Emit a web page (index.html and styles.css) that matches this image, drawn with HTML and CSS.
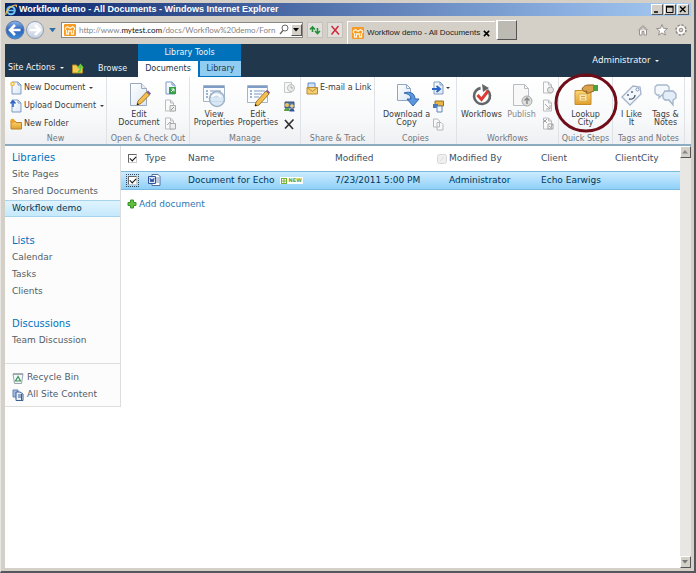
FILE: index.html
```html
<!DOCTYPE html>
<html lang="en">
<head>
<meta charset="utf-8">
<title>Workflow demo - All Documents</title>
<link rel="stylesheet" href="styles.css">
</head>
<body>
<svg class="defs" aria-hidden="true">
  <defs>
    <linearGradient id="ball" x1="0" y1="0" x2="0" y2="1"><stop offset="0" stop-color="#8fb8ea"/><stop offset=".5" stop-color="#2a62b8"/><stop offset="1" stop-color="#3f8fdc"/></linearGradient>
    <linearGradient id="glass" x1="0" y1="0" x2="0" y2="1"><stop offset="0" stop-color="#f4f7fb"/><stop offset="1" stop-color="#c3cedd"/></linearGradient>
    <linearGradient id="paper" x1="0" y1="0" x2="1" y2="1"><stop offset="0" stop-color="#fff"/><stop offset="1" stop-color="#dbe6f3"/></linearGradient>
    <linearGradient id="gold" x1="0" y1="0" x2="0" y2="1"><stop offset="0" stop-color="#fbd774"/><stop offset="1" stop-color="#e0a02c"/></linearGradient>
    <symbol id="site" viewBox="0 0 12 12"><rect width="12" height="12" rx="1" fill="#f59a23"/><path d="M1.500 6V4l2-1.500 2 1.500h1l2-1.500 2 1.500v2M2.500 6v4h2V7h3v3h2V6" fill="none" stroke="#fff2d8" stroke-width="1.300"/></symbol>
    <symbol id="page" viewBox="0 0 12 14"><path d="M2 1h6l3 3v9H2z" fill="url(#paper)" stroke="#7f9cc4"/><path d="M8 1v3h3" fill="none" stroke="#7f9cc4"/></symbol>
    <symbol id="graypage" viewBox="0 0 12 14"><path d="M1.500 1h5l3 3v8h-8z" fill="#fafafa" stroke="#b9bcc0"/><path d="M6.500 1v3h3" fill="none" stroke="#b9bcc0"/></symbol>
  </defs>
</svg>
<div class="window">
  <header class="titlebar">
    <svg class="ie" viewBox="0 0 12 12"><circle cx="6" cy="6.500" r="3.800" fill="none" stroke="#6fc4f5" stroke-width="2"/><path d="M3 6.500h6.500" stroke="#6fc4f5" stroke-width="1.500"/><path d="M1 11C0 8 6 1 11 1c1 1 0 2 0 2" fill="none" stroke="#f5c342" stroke-width="1.200"/></svg>
    <h1>Workflow demo - All Documents - Windows Internet Explorer</h1>
    <div class="winbuttons">
      <button aria-label="Minimize"><svg viewBox="0 0 10 9"><path d="M2 7h4" stroke="#000" stroke-width="1.500"/></svg></button>
      <button aria-label="Maximize"><svg viewBox="0 0 10 9"><path d="M1.500 2h6.500v5.500H1.500z" fill="none" stroke="#000"/><path d="M1 1.500h7.500" stroke="#000" stroke-width="1.500"/></svg></button>
      <button aria-label="Close"><svg viewBox="0 0 10 9"><path d="M2 1.500l5.500 5.500M7.500 1.500L2 7" stroke="#000" stroke-width="1.400"/></svg></button>
    </div>
  </header>

  <div class="toolbar">
    <button class="plain" aria-label="Back"><svg class="nav" viewBox="0 0 20 20"><circle cx="10" cy="10" r="9" fill="url(#ball)" stroke="#5b7aa8"/><path d="M15.500 10H6M10 5l-5 5 5 5" fill="none" stroke="#fff" stroke-width="2.600"/></svg></button>
    <button class="plain" aria-label="Forward"><svg class="nav" viewBox="0 0 20 20"><circle cx="10" cy="10" r="8.500" fill="url(#glass)" stroke="#8d9bb0"/><path d="M4.500 10H14M10 5l5 5-5 5" fill="none" stroke="#fff" stroke-width="2.600"/></svg></button>
    <button class="plain history" aria-label="Recent pages"><svg viewBox="0 0 8 6"><path d="M0 0h8L4 5z" fill="#2d6fa3"/></svg></button>
    <div class="address">
      <svg class="site"><use href="#site"/></svg>
      <a class="url" href="#">http://www.<b>mytest.com</b>/docs/Workflow%20demo/Forn</a>
      <button class="plain" aria-label="Search"><svg class="search" viewBox="0 0 10 12"><circle cx="6" cy="4" r="3" fill="none" stroke="#666"/><path d="M4 6.500L1 10" stroke="#666" stroke-width="1.300"/></svg></button>
      <button class="raised" aria-label="Show addresses"><svg viewBox="0 0 8 8"><path d="M1 2h6L4 5.500z"/></svg></button>
    </div>
    <button class="tool" aria-label="Refresh"><svg viewBox="0 0 12 12"><path d="M3.500 8V4M1 5.500L3.500 3 6 5.500M8.500 4v5M6 7l2.500 2.500L11 7" fill="none" stroke="#24913a" stroke-width="1.600"/></svg></button>
    <button class="tool" aria-label="Stop"><svg viewBox="0 0 12 12"><path d="M2.500 2l7.500 8.500M9.500 2L2.500 10.500" stroke="#d02b3c" stroke-width="1.500"/></svg></button>
    <div class="tab">
      <svg class="site"><use href="#site"/></svg><span>Workflow demo - All Documents</span>
      <button class="plain" aria-label="Close tab"><svg class="closetab" viewBox="0 0 8 8"><path d="M1 1l6 6M7 1L1 7" stroke="#000" stroke-width="1.800"/></svg></button>
    </div>
    <button class="newtab" aria-label="New tab"></button>
    <div class="tools">
      <button class="plain" aria-label="Home"><svg viewBox="0 0 12 12"><path d="M1 6.500L6 1.500l5 5M2.500 6v5H5V7.500h2V11h2.500V6L6 2.500z" fill="#fff" stroke="#96928b"/></svg></button>
      <button class="plain" aria-label="Favorites"><svg viewBox="0 0 12 12"><path d="M6 .5l1.500 3.800 4 .2-3.100 2.600 1 4L6 8.900l-3.400 2.200 1-4L.5 4.500l4-.2z" fill="#fff" stroke="#96928b"/></svg></button>
      <button class="plain" aria-label="Settings"><svg viewBox="0 0 12 12"><circle cx="6" cy="6" r="4.500" fill="none" stroke="#8e8a83" stroke-width="2.600" stroke-dasharray="2 1.500"/><circle cx="6" cy="6" r="3.200" fill="#d4d0c8" stroke="#fff" stroke-width="2"/><circle cx="6" cy="6" r="1.800" fill="none" stroke="#96928b"/></svg></button>
    </div>
  </div>

  <div class="viewport">
    <nav class="topbar">
      <button class="menu actions">Site Actions <i class="caret"></i></button>
      <button class="plain up" aria-label="Navigate up"><svg viewBox="0 0 12 11"><path d="M.5 2h4l1 1.500h5V10H.5z" fill="#f2c955" stroke="#b88a23"/><path d="M6 9c2 0 2.500-2 2.500-5M6 5l2.500-3L11 5" fill="none" stroke="#62c93b" stroke-width="1.800"/></svg></button>
      <a class="browse" href="#">Browse</a>
      <div class="context">
        <div class="ctitle">Library Tools</div>
        <div class="ctabs"><a class="on" href="#">Documents</a><a class="off" href="#">Library</a></div>
      </div>
      <button class="menu user">Administrator <i class="caret"></i></button>
    </nav>

    <section class="ribbon">
      <div class="group g-new">
        <div class="items rows">
          <button><svg viewBox="0 0 12 14"><use href="#page"/><circle cx="2.500" cy="3" r="2.300" fill="#f3ba34"/><circle cx="2.500" cy="3" r="1" fill="#fff5bf"/></svg>New Document <i class="caret"></i></button>
          <button><svg viewBox="0 0 12 14"><use href="#page"/><path d="M3 8V2M.5 4.500L3 2l2.500 2.500" fill="none" stroke="#2c65c2" stroke-width="1.600"/></svg>Upload Document <i class="caret"></i></button>
          <button><svg viewBox="0 0 12 14"><path d="M1 4h4l1 1.500h5.500V12H1z" fill="url(#gold)" stroke="#b88422"/><circle cx="2.500" cy="4" r="2.200" fill="#f39f24"/></svg>New Folder</button>
        </div>
        <h2>New</h2>
      </div>
      <div class="group g-open">
        <div class="items">
          <button class="big"><svg viewBox="0 0 26 26"><path d="M4.500 1.500h11l5 5v17h-16z" fill="url(#paper)" stroke="#9aa9bc"/><path d="M15.500 1.500v5h5" fill="#e6edf5" stroke="#9aa9bc"/><path d="M11 23l1-4L20.500 10l3 3L15 21.500z" fill="#f3bf50" stroke="#a27629"/><path d="M20.500 10l1.500-1.500 3 3-1.500 1.500z" fill="#7c5c9e"/><path d="M11 23l.5-2 1.500 1.500z"/></svg>Edit<br>Document</button>
          <div class="minis">
            <button aria-label="Check out"><svg viewBox="0 0 12 14"><use href="#page"/><path d="M5 6h7v7H5z" fill="#35a24a"/><path d="M7 11l3-3M7.500 8H10v2.500" fill="none" stroke="#fff"/></svg></button>
            <button aria-label="Check in"><svg viewBox="0 0 12 14"><use href="#graypage"/><path d="M6 6.500h5.500V12H6z" fill="#eee" stroke="#aaa"/><path d="M7 11l3-3" stroke="#999"/></svg></button>
            <button aria-label="Discard check out"><svg viewBox="0 0 12 14"><use href="#graypage"/><path d="M6 6.500h5.500V12H6zM3 8l3-3 2 2" fill="#eee" stroke="#aaa"/></svg></button>
          </div>
        </div>
        <h2>Open &amp; Check Out</h2>
      </div>
      <div class="group g-manage">
        <div class="items">
          <button class="big"><svg viewBox="0 0 26 26"><path d="M2.500 3.500h21v16h-21z" fill="#fbfcfe" stroke="#a4b4c9"/><path d="M3 5h20" stroke="#7d9cc6" stroke-width="2"/><path d="M5 9h2M5 12h2M5 15h2" stroke="#3c6db0"/><path d="M9 9h11M9 12h11M9 15h8" stroke="#8099bd"/><circle cx="16" cy="17" r="7.500" fill="#cfe2f3" fill-opacity=".8" stroke="#9db2c8" stroke-width="1.500"/><path d="M11 15c3-4 7-3 9 0" fill="none" stroke="#fff" stroke-width="2"/></svg>View<br>Properties</button>
          <button class="big"><svg viewBox="0 0 26 26"><path d="M2.500 3.500h20v17h-20z" fill="#fbfcfe" stroke="#a4b4c9"/><path d="M3 5h19" stroke="#7d9cc6" stroke-width="2"/><path d="M5 9h2M5 12h2M5 15h2" stroke="#3c6db0"/><path d="M9 9h11M9 12h8M9 15h5" stroke="#8099bd"/><path d="M10 24l1-4L21 9l3 3L14 23z" fill="#f3bf50" stroke="#a27629"/><path d="M21 9l1-1.500 3 3-1 1.500z" fill="#7c5c9e"/><path d="M10 24l.5-2 1.500 1.500z"/></svg>Edit<br>Properties</button>
          <div class="minis">
            <button aria-label="Version history"><svg viewBox="0 0 12 14"><path d="M1.500 1.500h7v10h-7z" fill="#f7f7f7" stroke="#c6c8ca"/><circle cx="8" cy="7" r="3.500" fill="#eee" stroke="#bbb"/><path d="M8 5v2h2" fill="none" stroke="#aaa"/></svg></button>
            <button aria-label="Permissions"><svg viewBox="0 0 12 14"><path d="M2 3h9v6H2z" fill="#4e78ae" stroke="#39506f"/><circle cx="4" cy="6" r="2" fill="#efc45b"/><path d="M1 12c0-4 6-4 6 0z" fill="#5a9d45"/><circle cx="9" cy="7" r="1.800" fill="#efd08d"/><path d="M6.500 12.500c0-4 5-4 5 0z" fill="#31589b"/></svg></button>
            <button aria-label="Delete"><svg viewBox="0 0 12 14"><path d="M2 3l8 9M10.500 2.500L2 11.500" stroke="#333" stroke-width="1.700"/></svg></button>
          </div>
        </div>
        <h2>Manage</h2>
      </div>
      <div class="group g-share">
        <div class="items rows">
          <button><svg viewBox="0 0 12 14"><path d="M2 2h7v8H2z" fill="#cfe2f8" stroke="#5e8cc8"/><path d="M1 6.500h10.500V13H1z" fill="#f6cf70" stroke="#b98b34"/><path d="M1 6.500l5.500 4 5-4" fill="none" stroke="#b98b34"/></svg>E-mail a Link</button>
        </div>
        <h2>Share &amp; Track</h2>
      </div>
      <div class="group g-copies">
        <div class="items">
          <button class="big"><svg viewBox="0 0 26 26"><path d="M3.500 2.500h9l4 4v12h-13z" fill="url(#paper)" stroke="#90a7c5"/><path d="M12.500 2.500v4h4" fill="none" stroke="#90a7c5"/><path d="M10 11c6-2 11 0 11 6h4l-6 7-6-7h4c0-3-2-5-7-6z" fill="#5b98dd" stroke="#3467ac"/></svg>Download a<br>Copy</button>
          <div class="minis">
            <button class="wide" aria-label="Send to"><svg viewBox="0 0 12 14"><use href="#page"/><path d="M0 8h7M4.500 5L8 8l-3.500 3" fill="none" stroke="#2b66c4" stroke-width="2"/></svg><i class="caret"></i></button>
            <button aria-label="Manage copies"><svg viewBox="0 0 12 14"><path d="M3 2h8.500v5H3z" fill="#e9b542" stroke="#957226"/><path d="M1 5h5v4H1z" fill="#4779bb"/><path d="M5 7h5v6H5z" fill="#f2f7fd" stroke="#6084b5"/></svg></button>
            <button aria-label="Go to source"><svg viewBox="0 0 12 14"><path d="M1.500 2h4l2 2v6h-6zM5 5.500h4l2 2V13H5z" fill="#f9f9f9" stroke="#b6b8bb"/></svg></button>
          </div>
        </div>
        <h2>Copies</h2>
      </div>
      <div class="group g-flows">
        <div class="items">
          <button class="big"><svg viewBox="0 0 26 26"><circle cx="13" cy="14" r="8" fill="#fff" stroke="#636668" stroke-width="2.600" stroke-dasharray="43 8" transform="rotate(-50 13 14)"/><path d="M13 2l7 4-6 4z" fill="#636668"/><path d="M8.500 13l4 4.500L19 9" fill="none" stroke="#dc3c32" stroke-width="3"/></svg>Workflows</button>
          <button class="big disabled"><svg viewBox="0 0 26 26"><path d="M4.500 2.500h11l4 4v17h-15z" fill="#f8f8f8" stroke="#b9bcc0"/><path d="M15.500 2.500v4h4" fill="none" stroke="#b9bcc0"/><circle cx="18" cy="19" r="5" fill="#ddd" stroke="#aaa"/><path d="M18 22v-6M15.500 18.500L18 16l2.500 2.500" fill="none" stroke="#888" stroke-width="1.500"/></svg>Publish</button>
          <div class="minis">
            <button aria-label="Unpublish"><svg viewBox="0 0 12 14"><use href="#graypage"/><circle cx="8.500" cy="9" r="3" fill="#e4e4e4" stroke="#aaa"/></svg></button>
            <button aria-label="Approve"><svg viewBox="0 0 12 14"><use href="#graypage"/><path d="M3 5l5 5M8 6v4H4" fill="none" stroke="#aaa"/></svg></button>
            <button aria-label="Cancel approval"><svg viewBox="0 0 12 14"><use href="#graypage"/><path d="M1 2l4 4M5 2L1 6M6 7h5v5H6zM7 9l1.500 1.500L11 7" fill="none" stroke="#a4a4a4"/></svg></button>
          </div>
        </div>
        <h2>Workflows</h2>
      </div>
      <div class="group g-quick">
        <div class="items">
          <button class="big"><svg viewBox="0 0 26 26"><path d="M2 8.500h16v14H2z" fill="url(#gold)" stroke="#c78d2d"/><path d="M6 12h8v7H6z" fill="#fbe7ae" stroke="#e0b053"/><path d="M8 14.500h4M8 17h4" stroke="#d79d42"/><path d="M9 7c2-4 5-4 7-4h5v6c-4 1-5 3-8 2l1-2c-3 1-4 0-5-2z" fill="#dba14b" stroke="#8a5d1e"/><path d="M20 3h5v6h-5z" fill="#46a33b"/></svg>Lookup<br>City</button>
        </div>
        <h2>Quick Steps</h2>
        <svg class="ring" viewBox="0 0 64 60" aria-hidden="true"><ellipse cx="32" cy="30" rx="30" ry="28" fill="none" stroke="#700d18" stroke-width="3"/></svg>
      </div>
      <div class="group g-tags">
        <div class="items">
          <button class="big"><svg viewBox="0 0 26 26"><path d="M3 15L14 4l7 1 1 7-11 11z" fill="#f3f7fc" stroke="#a3b4ca" stroke-width="1.300"/><circle cx="18.500" cy="7.500" r="1.500" fill="#fff" stroke="#8296b1"/><path d="M9 12v2M13 9v2M10 17c4 1 6-2 6-4" fill="none" stroke="#44556c" stroke-width="1.300"/></svg>I Like<br>It</button>
          <button class="big"><svg viewBox="0 0 26 26"><path d="M4 3h10l2 2v6l-2 2H9l-3 3v-3H4l-2-2V5z" fill="#f4f8fc" stroke="#a8b8cc" stroke-width="1.300"/><path d="M12 9h8l3 3v4l-3 2v5l-4-5h-4l-2-2v-4z" fill="#e3edf7" stroke="#a0b2c9" stroke-width="1.300"/></svg>Tags &amp;<br>Notes</button>
        </div>
        <h2>Tags and Notes</h2>
      </div>
    </section>

    <div class="body">
      <aside class="side">
        <nav>
          <h3>Libraries</h3>
          <a href="#">Site Pages</a><a href="#">Shared Documents</a><a class="here" href="#">Workflow demo</a>
          <h3>Lists</h3>
          <a href="#">Calendar</a><a href="#">Tasks</a><a href="#">Clients</a>
          <h3>Discussions</h3>
          <a href="#">Team Discussion</a>
        </nav>
        <div class="extra">
          <a href="#"><svg viewBox="0 0 12 12"><path d="M1 2h10l-1.500 9.500h-7z" fill="#f5f8f8" stroke="#9aa6ab"/><path d="M1 2h10" stroke="#7e8b90"/><path d="M6 4.500L3.500 9h5z" fill="none" stroke="#3b9160" stroke-width="1.200"/></svg>Recycle Bin</a>
          <a href="#"><svg viewBox="0 0 12 12"><path d="M1 1h5v7H1z" fill="#9bbbe3" stroke="#6785b1"/><path d="M4 3h4l3 2v6.500H4z" fill="#e6eef9" stroke="#3e5f94"/><path d="M6 6h3M6 8h3M9.500 5v6" stroke="#3e5f94"/></svg>All Site Content</a>
        </div>
      </aside>
      <main>
        <table>
          <colgroup><col class="c-check"><col class="c-type"><col class="c-name"><col class="c-mod"><col class="c-by"><col class="c-client"><col></colgroup>
          <thead><tr>
            <th><input type="checkbox" checked aria-label="Select all"></th><th>Type</th><th>Name</th><th>Modified</th><th><svg class="presence" viewBox="0 0 10 10"><rect x=".5" y=".5" width="9" height="9" rx="2" fill="#efefef" stroke="#d8d8d8"/><path d="M3 7l4-4" stroke="#ddd"/></svg>Modified By</th><th>Client</th><th>ClientCity</th>
          </tr></thead>
          <tbody><tr>
            <td><input class="focus" type="checkbox" checked aria-label="Select Document for Echo"></td>
            <td><svg class="word" viewBox="0 0 13 12"><path d="M4 .5h6l2 2v9H4z" fill="#fff" stroke="#57709f"/><path d="M8 4h3M8 6h3M8 8h3" stroke="#7d93bd"/><path d="M.5 2.500h7v7h-7z" fill="#dfe8f8" stroke="#3255a0"/><path d="M2 4l1 4 1-3 1 3 1-4" fill="none" stroke="#2a4d9c"/></svg></td>
            <td>Document for Echo<span class="new"><svg viewBox="0 0 6 6"><rect x=".5" y=".5" width="5" height="5" fill="#fff" stroke="#73b234"/><path d="M3 1v4M1 3h4" stroke="#73b234"/></svg>NEW</span></td>
            <td>7/23/2011 5:00 PM</td><td class="by">Administrator</td><td>Echo Earwigs</td><td></td>
          </tr></tbody>
        </table>
        <a class="add" href="#"><svg viewBox="0 0 10 10"><path d="M3.500 1h3v2.500H9v3H6.500V9h-3V6.500H1v-3h2.500z" fill="#5fc03a" stroke="#38942b"/></svg>Add document</a>
      </main>
      <div class="scroll">
        <button class="raised" aria-label="Scroll up"><svg viewBox="0 0 8 8"><path d="M1 5.500h6L4 2z" fill="#888"/></svg></button>
        <button class="raised" aria-label="Scroll down"><svg viewBox="0 0 8 8"><path d="M1 2h6L4 5.500z" fill="#777"/></svg></button>
      </div>
    </div>
  </div>
</div>
</body>
</html>
```
FILE: styles.css
```css
* { box-sizing: border-box; }
body { margin: 0; font: 9px/12px "DejaVu Sans", sans-serif; color: #525c68; }
button { font: inherit; color: inherit; background: none; border: 0; padding: 0; margin: 0; }
a { color: inherit; text-decoration: none; }
svg { display: block; flex: none; }
h1, h2, h3 { margin: 0; font-weight: normal; }
.defs { position: absolute; width: 0; height: 0; }

.window { display: flex; flex-direction: column; min-height: 100vh; padding: 3px 3px 3px 4px; background: #d4d0c8; border-right: 2px solid #55575c; border-bottom: 2px solid #55575c; border-left: 1px solid #e8e6e2; }
.titlebar { display: flex; align-items: center; height: 13px; background: linear-gradient(90deg, #0a246a, #8fb4e4 85%, #a6caf0); color: #fff; }
.titlebar h1 { flex: 1; font: bold 9px/13px "Liberation Sans", sans-serif; }
.ie { width: 12px; height: 12px; margin-right: 2px; }
.winbuttons { display: flex; gap: 1px; margin-right: 2px; }
.winbuttons button, .raised { background: #d4d0c8; border: 1px solid; border-color: #fff #555 #555 #fff; }
.winbuttons button { width: 12px; height: 11px; }
.winbuttons svg { width: 10px; height: 9px; }

.toolbar { display: flex; align-items: center; height: 28px; color: #222; }
.nav { width: 20px; height: 20px; }
.history { margin: 0 5px 0 4px; }
.history svg { width: 7px; height: 5px; }
.address { display: flex; align-items: center; width: 242px; height: 16px; padding-left: 2px; background: #fff; border: 1px solid #8b8883; }
.address .site { margin-right: 3px; }
.site { width: 12px; height: 12px; }
.url { flex: 1; white-space: nowrap; color: #858585; font: 8px/14px Lato, sans-serif; }
.url b { font-weight: normal; color: #111; }
.search { width: 10px; height: 12px; margin: 0 2px; }
.raised { width: 11px; height: 12px; }
.raised svg { width: 8px; height: 8px; }
.tool { display: grid; place-items: center; width: 16px; height: 16px; margin-left: 4px; background: #e2e0dc; border: 1px solid #c5c2bb; }
.tool svg { width: 12px; height: 12px; }
.tab { display: flex; align-items: center; align-self: flex-end; gap: 3px; width: 148px; height: 23px; margin-left: 4px; padding-left: 4px; border: solid #fff; border-width: 1px 0 0 1px; font: 8px/12px "Liberation Sans", sans-serif; white-space: nowrap; }
.closetab { width: 7px; height: 7px; }
.newtab { width: 21px; height: 20px; margin-left: 1px; background: #bdb9b3; border: solid; border-width: 1px 1px 1px 2px; border-color: #fff #555 #555 #fff; }
.tools { display: flex; gap: 7px; margin-left: auto; padding-right: 4px; }
.tools svg { width: 12px; height: 12px; }

.viewport { flex: 1; display: flex; flex-direction: column; background: #fff; }
.topbar { display: flex; align-items: flex-end; height: 33px; background: #21374c; color: #f0f4f8; font: 8px/12px "DejaVu Sans", sans-serif; }
.caret { display: inline-block; border: 2px solid transparent; border-top-color: currentColor; border-bottom: 0; margin-left: 2px; vertical-align: middle; }
.actions { width: 62px; padding: 0 0 3px 3px; text-align: left; white-space: nowrap; }
.up { width: 31px; padding: 0 0 3px 5px; }
.up svg { width: 12px; height: 11px; }
.browse { width: 40px; padding-bottom: 2px; }
.context { width: 103px; background: #0072bc; text-align: center; }
.ctitle { height: 17px; line-height: 17px; }
.ctabs { display: flex; gap: 2px; height: 16px; line-height: 16px; color: #21374c; }
.on { width: 60px; background: #fff; }
.off { flex: 1; height: 15px; background: #91cdf2; }
.user { margin: 0 32px 11px auto; font: 9px/12px "Noto Sans", sans-serif; }

.ribbon { display: flex; height: 69px; background: linear-gradient(#fff, #f8f9fa 60%, #eef0f3); border-bottom: 2px solid #8aabc0; font: 8px/8px "DejaVu Sans", sans-serif; color: #3c3c3c; }
.group { display: flex; flex-direction: column; position: relative; border-right: 1px solid #dfe2e6; padding-top: 2px; }
.group h2 { font: 8px/11px "DejaVu Sans", sans-serif; color: #71777e; text-align: center; white-space: nowrap; }
.items { display: flex; height: 54px; justify-content: center; }
.rows { flex-direction: column; justify-content: flex-start; }
.rows button { display: flex; align-items: center; height: 18px; padding-left: 5px; gap: 2px; white-space: nowrap; }
.rows svg, .minis svg { width: 12px; height: 14px; }
.big { display: flex; flex-direction: column; align-items: center; white-space: nowrap; padding-top: 3px; width: 44px; }
.big svg { width: 26px; height: 26px; margin-bottom: 3px; }
.disabled { color: #85898e; }
.minis { width: 18px; }
.minis button { display: flex; align-items: center; justify-content: center; width: 18px; height: 18px; }
.minis .wide { width: 22px; justify-content: flex-start; padding-left: 3px; }
.g-new { width: 102px; }
.g-open { width: 83px; }
.g-manage { width: 111px; }
.g-share { width: 74px; }
.g-copies { width: 82px; }
.g-flows { width: 102px; }
.g-flows .big { width: 46px; }
.g-flows .disabled { width: 34px; }
.g-quick { width: 54px; }
.g-tags { width: 72px; }
.g-tags .big { width: 34px; }
.ring { position: absolute; left: -5px; top: -4px; width: 64px; height: 60px; pointer-events: none; }

.body { flex: 1; display: flex; align-items: stretch; }
.side { align-self: flex-start; width: 116px; background: #fcfcfc; border-right: 1px solid #dbddde; border-bottom: 1px solid #dbddde; }
.side a { display: block; height: 17px; padding-left: 7px; line-height: 15px; border: 1px solid transparent; border-width: 1px 0; }
.side h3 { padding: 4px 7px 0; font-size: 10px; line-height: 16px; color: #0072bc; }
.side a + h3 { margin-top: 12px; }
.side .here { color: #003759; background: linear-gradient(#e0f3fe, #c5e9fc); border-color: #a6d4ed; }
.extra { margin-top: 14px; padding: 5px 0 3px; border-top: 1px solid #dbddde; }
.side .extra a { display: flex; align-items: center; gap: 3px; }
.extra svg { width: 12px; height: 12px; }
main { flex: 1; min-width: 0; }
table { width: 100%; table-layout: fixed; border-collapse: collapse; color: #3b4f65; white-space: nowrap; }
th, td { padding: 0; text-align: left; font-weight: normal; vertical-align: middle; }
th { height: 25px; }
td { height: 18px; color: #003759; border: solid #7bb9df; border-width: 1px 0; }
tbody tr { background: linear-gradient(#d0edff, #8fd0f8); }
.c-check { width: 24px; } .c-type { width: 43px; } .c-name { width: 147px; } .c-mod { width: 102px; } .c-by { width: 104px; } .c-client { width: 74px; }
input { appearance: none; display: block; width: 9px; height: 9px; margin: 0 0 0 7px; border: 1px solid; border-color: #666 #ccc #ccc #666; background: #fff; }
input:checked::after { content: ""; display: block; width: 5px; height: 3px; margin: 1px; border: solid #111; border-width: 0 0 1px 1px; transform: rotate(-45deg); }
.focus { outline: 1px dotted #345; outline-offset: 1px; }
.presence { display: inline-block; width: 10px; height: 10px; margin-right: 2px; vertical-align: middle; }
.word { width: 13px; height: 12px; margin-left: 3px; }
.by { padding-left: 12px; }
.new { display: inline-flex; align-items: center; gap: 2px; height: 7px; margin-left: 5px; padding: 0 1px; background: #fff; color: #60a32b; font: bold 5px/7px "DejaVu Sans", sans-serif; vertical-align: middle; }
.new svg { width: 6px; height: 6px; }
.add { display: inline-flex; align-items: center; gap: 2px; margin: 8px 0 0 6px; color: #2b78b5; }
.add svg { width: 10px; height: 10px; }
.scroll { display: flex; flex-direction: column; justify-content: space-between; width: 11px; background: #e9e7e3; }
```
